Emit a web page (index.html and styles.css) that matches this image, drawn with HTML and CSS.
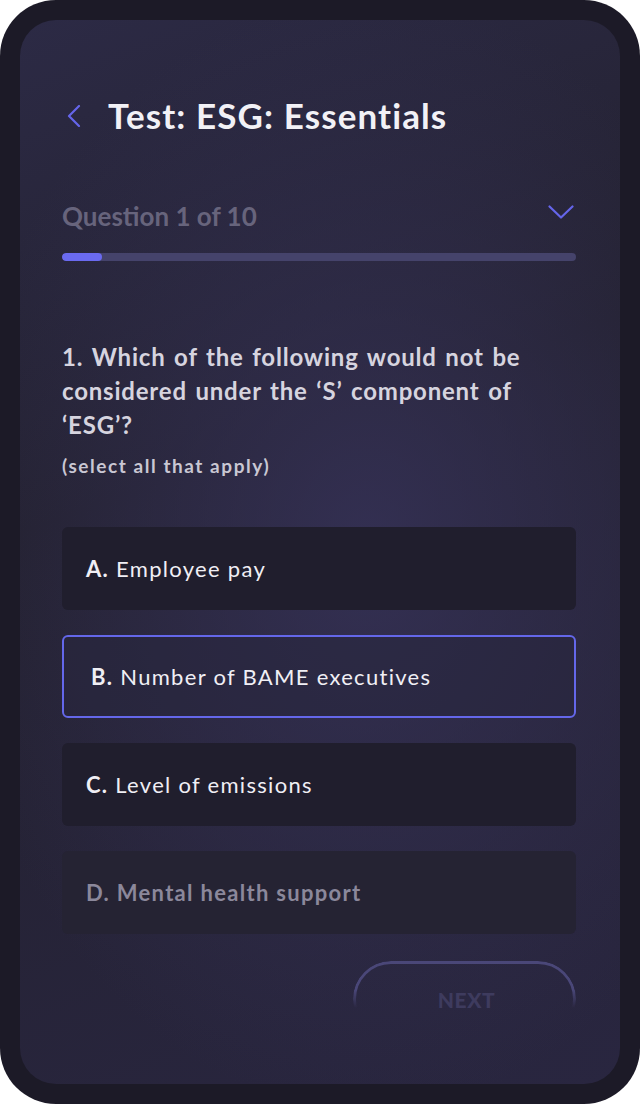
FILE: index.html
```html
<!DOCTYPE html>
<html lang="en">
<head>
<meta charset="utf-8">
<title>Test: ESG: Essentials</title>
<link rel="stylesheet" href="styles.css">
</head>
<body>
<div class="frame">
  <div class="screen">
    <header class="header">
      <svg class="back" width="14" height="22" viewBox="0 0 14 22"><path d="M12 1 L2 11 L12 21" fill="none" stroke="#6565ea" stroke-width="2.2" stroke-linecap="round" stroke-linejoin="round"/></svg>
      <h1 class="title">Test: ESG: Essentials</h1>
    </header>
    <div class="progress-head">
      <span class="qcount">Question 1 of 10</span>
      <svg class="down" width="26" height="14" viewBox="0 0 26 14"><path d="M1.5 1.5 L13 12.5 L24.5 1.5" fill="none" stroke="#6565ea" stroke-width="2.2" stroke-linecap="round" stroke-linejoin="round"/></svg>
    </div>
    <div class="track"><div class="fill" style="width:40px"></div></div>
    <p class="question">1. Which of the following would not be considered under the ‘S’ component of ‘ESG’?</p>
    <p class="hint">(select all that apply)</p>
    <div class="options">
      <div class="option"><b>A.</b>&nbsp;Employee pay</div>
      <div class="option selected"><b>B.</b>&nbsp;Number of BAME executives</div>
      <div class="option"><b>C.</b>&nbsp;Level of emissions</div>
      <div class="option faded">D. Mental health support</div>
    </div>
    <div class="actions">
      <button class="next">NEXT</button>
    </div>
  </div>
</div>
</body>
</html>
```
FILE: styles.css
```css
html, body {
  margin: 0;
  padding: 0;
  background: #ffffff;
}
body {
  font-family: Lato, "Open Sans", sans-serif;
}
.frame {
  width: 640px;
  height: 1104px;
  box-sizing: border-box;
  padding: 20px;
  border-radius: 56px;
  background: #1c1a27;
}
.screen {
  width: 600px;
  height: 1064px;
  box-sizing: border-box;
  border-radius: 36px;
  padding: 75px 44px 0 42px;
  overflow: hidden;
  background:
    radial-gradient(ellipse 420px 560px at 58% 50%, rgba(54, 50, 88, 0.85), rgba(54, 50, 88, 0) 100%),
    linear-gradient(160deg, #2c2a45 0%, #23212f 40%, #292640 100%);
  display: flex;
  flex-direction: column;
}
.header {
  display: flex;
  align-items: center;
  height: 40px;
}
.back {
  margin-left: 5px;
  margin-right: 27px;
  margin-top: 2px;
}
.title {
  margin: 0;
  font-size: 35px;
  line-height: 40px;
  font-weight: 700;
  letter-spacing: 1.1px;
  color: #f2f1f6;
}
.progress-head {
  margin-top: 66px;
  height: 30px;
  display: flex;
  align-items: center;
  justify-content: space-between;
}
.qcount {
  font-size: 26px;
  font-weight: 700;
  color: #67647c;
}
.down {
  margin-right: 2px;
  margin-top: -8px;
}
.track {
  margin-top: 22px;
  height: 8px;
  border-radius: 4px;
  background: #45436b;
  overflow: hidden;
}
.fill {
  height: 100%;
  border-radius: 4px;
  background: #6a6af0;
}
.question {
  margin: 79px 0 0;
  font-size: 24px;
  line-height: 34px;
  font-weight: 700;
  letter-spacing: 0.8px;
  word-spacing: 2px;
  color: #d6d4df;
}
.hint {
  margin: 12px 0 0;
  font-size: 19px;
  line-height: 24px;
  font-weight: 700;
  letter-spacing: 1.55px;
  color: #c9c7d3;
}
.options {
  margin-top: 49px;
  display: flex;
  flex-direction: column;
  gap: 25px;
}
.option {
  height: 83px;
  box-sizing: border-box;
  padding: 0 24px;
  display: flex;
  align-items: center;
  border-radius: 6px;
  background: #201e2d;
  font-size: 22px;
  letter-spacing: 1.3px;
  color: #f0eff5;
}
.option b {
  font-weight: 700;
}
.option.selected {
  background: rgba(40, 38, 62, 0.6);
  border: 2px solid #6467ea;
  padding-left: 27px;
}
.option.faded {
  background: #252333;
  color: #8b889b;
  font-weight: 700;
}
.actions {
  margin-top: 27px;
  display: flex;
  justify-content: flex-end;
}
.next {
  position: relative;
  width: 223px;
  height: 76px;
  border: none;
  background: transparent;
  font-family: Lato, "Open Sans", sans-serif;
  font-size: 21px;
  font-weight: 900;
  letter-spacing: 0.5px;
  color: #3e3b5e;
  padding: 0 0 0 4px;
}
.next::before {
  content: "";
  position: absolute;
  inset: 0;
  border: 3px solid #4a4778;
  border-radius: 38px;
  -webkit-mask-image: linear-gradient(to bottom, #000 38%, transparent 62%);
  mask-image: linear-gradient(to bottom, #000 38%, transparent 62%);
}
```
